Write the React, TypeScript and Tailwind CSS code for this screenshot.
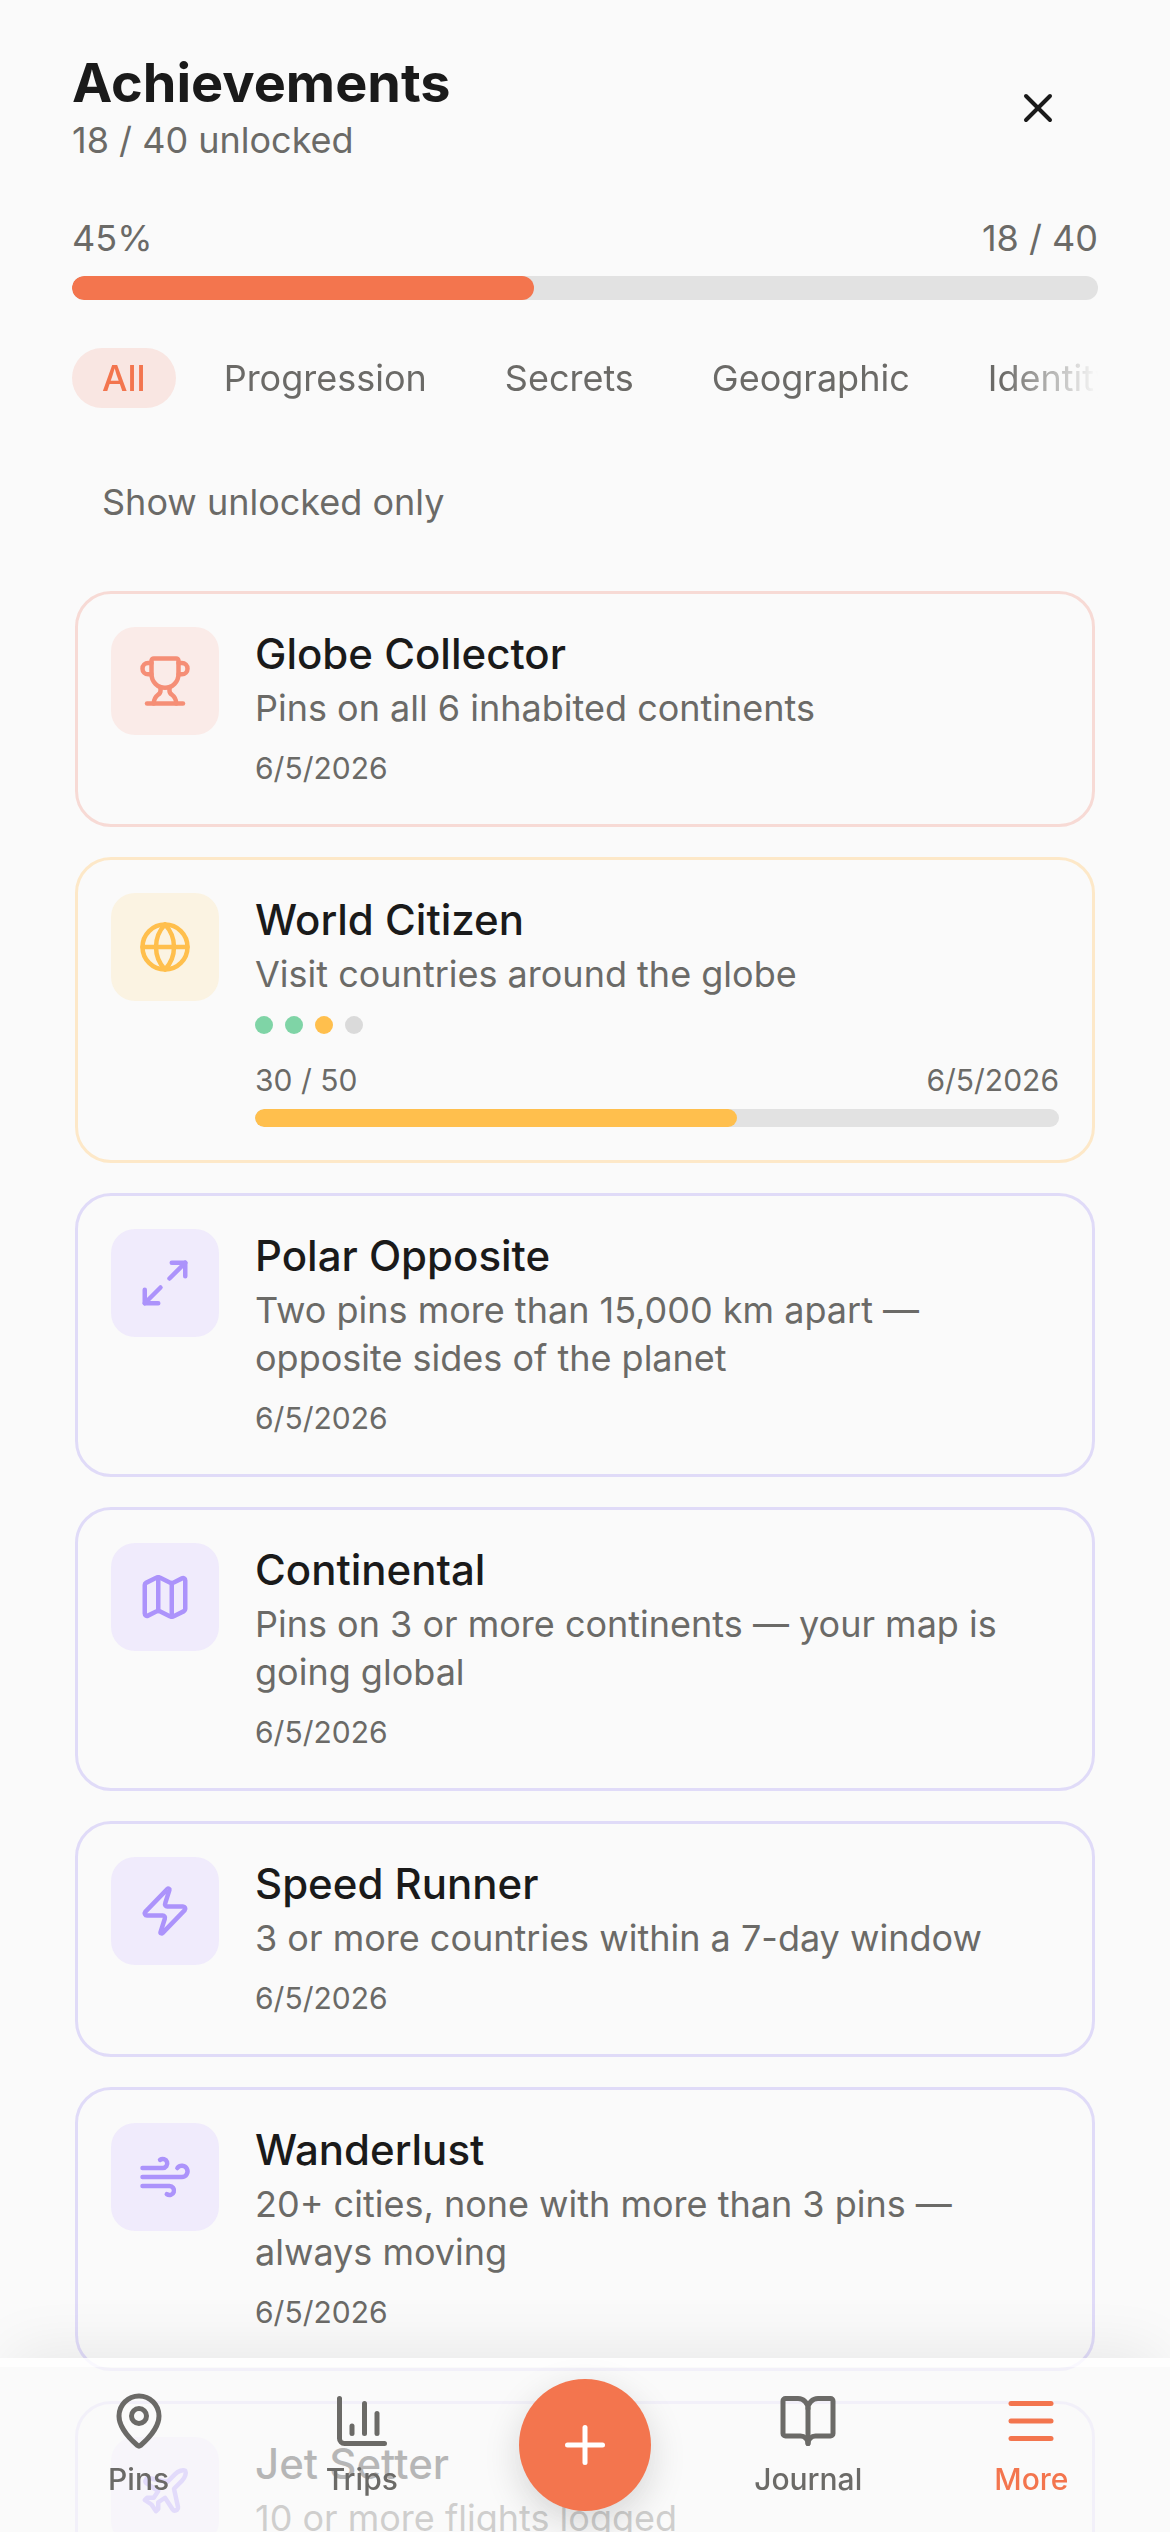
import {
  BookOpen,
  ChartColumn,
  Globe,
  Map,
  MapPin,
  Maximize2,
  Menu,
  Plane,
  Plus,
  Trophy,
  Wind,
  X,
  Zap,
  type LucideIcon,
} from 'lucide-react'
import clsx from 'clsx'
import { useState } from 'react'

type Tone = 'coral' | 'amber' | 'violet'

interface Achievement {
  title: string
  description: string
  date: string
  icon: LucideIcon
  tone: Tone
  tiers?: string[]
  progress?: { value: number; max: number }
}

const tones: Record<Tone, { border: string; tile: string }> = {
  coral: { border: 'border-[#f7dad5]', tile: 'bg-[#faebe8] text-[#f58e76]' },
  amber: { border: 'border-[#fde8c8]', tile: 'bg-[#fbf3e2] text-[#ffbf4d]' },
  violet: { border: 'border-[#e0dbf8]', tile: 'bg-[#f0ebfc] text-[#ac93fb]' },
}

const tierColors: Record<string, string> = {
  done: 'bg-[#7fd4a6]',
  current: 'bg-[#ffbf4d]',
  locked: 'bg-[#dadada]',
}

const categories = ['All', 'Progression', 'Secrets', 'Geographic', 'Identity']

const achievements: Achievement[] = [
  {
    title: 'Globe Collector',
    description: 'Pins on all 6 inhabited continents',
    date: '6/5/2026',
    icon: Trophy,
    tone: 'coral',
  },
  {
    title: 'World Citizen',
    description: 'Visit countries around the globe',
    date: '6/5/2026',
    icon: Globe,
    tone: 'amber',
    tiers: ['done', 'done', 'current', 'locked'],
    progress: { value: 30, max: 50 },
  },
  {
    title: 'Polar Opposite',
    description: 'Two pins more than 15,000 km apart — opposite sides of the planet',
    date: '6/5/2026',
    icon: Maximize2,
    tone: 'violet',
  },
  {
    title: 'Continental',
    description: 'Pins on 3 or more continents — your map is going global',
    date: '6/5/2026',
    icon: Map,
    tone: 'violet',
  },
  {
    title: 'Speed Runner',
    description: '3 or more countries within a 7-day window',
    date: '6/5/2026',
    icon: Zap,
    tone: 'violet',
  },
  {
    title: 'Wanderlust',
    description: '20+ cities, none with more than 3 pins — always moving',
    date: '6/5/2026',
    icon: Wind,
    tone: 'violet',
  },
  {
    title: 'Jet Setter',
    description: '10 or more flights logged',
    date: '6/5/2026',
    icon: Plane,
    tone: 'violet',
  },
]

interface ProgressBarProps {
  label: string
  value: number
  max: number
  className: string
  fillClassName: string
}

function ProgressBar({ label, value, max, className, fillClassName }: ProgressBarProps) {
  return (
    <div
      role="progressbar"
      aria-label={label}
      aria-valuenow={value}
      aria-valuemax={max}
      className={clsx('overflow-hidden rounded-full bg-[#e2e2e2]', className)}
    >
      <div className={clsx('h-full rounded-full', fillClassName)} style={{ width: `${(value / max) * 100}%` }} />
    </div>
  )
}

function AchievementCard({ item }: { item: Achievement }) {
  const Icon = item.icon
  const tone = tones[item.tone]

  return (
    <li className={clsx('flex items-start gap-9 rounded-[36px] border-3 p-[33px]', tone.border)}>
      <div className={clsx('flex size-[108px] shrink-0 items-center justify-center rounded-3xl', tone.tile)}>
        <Icon size={54} />
      </div>
      <div className="min-w-0 flex-1">
        <h2 className="text-[42px] leading-[54px] font-medium text-[#1a1a1a]">{item.title}</h2>
        <p className="mt-[3px] text-[36px] leading-[48px]">{item.description}</p>

        {item.tiers && (
          <div className="mt-[18px] mb-6 flex gap-3">
            {item.tiers.map((tier, index) => (
              <span key={index} className={clsx('size-[18px] rounded-full', tierColors[tier])} />
            ))}
          </div>
        )}

        {item.progress ? (
          <>
            <div className="mb-1.5 flex justify-between text-[30px] leading-[45px]">
              <span>
                {item.progress.value} / {item.progress.max}
              </span>
              <span>{item.date}</span>
            </div>
            <ProgressBar
              label={item.title}
              value={item.progress.value}
              max={item.progress.max}
              className="h-[18px]"
              fillClassName="bg-[#ffbf4d]"
            />
          </>
        ) : (
          <p className="mt-[14px] text-[30px] leading-[45px]">{item.date}</p>
        )}
      </div>
    </li>
  )
}

function NavItem({ icon: Icon, label, active = false }: { icon: LucideIcon; label: string; active?: boolean }) {
  return (
    <a
      href="#"
      aria-current={active ? 'page' : undefined}
      className={clsx(
        'flex flex-col items-center gap-1.5 pt-6 text-[30px] leading-[45px] font-medium',
        active && 'text-[#f3754e]',
      )}
    >
      <Icon size={60} />
      {label}
    </a>
  )
}

function BottomNav() {
  return (
    <nav className="fixed inset-x-0 bottom-0 grid h-[174px] grid-cols-5 border-t-9 border-white/80 bg-[#fafafa]/70 bg-clip-padding px-[27px] shadow-[0_-18px_60px_-12px_rgba(0,0,0,0.08)]">
      <NavItem icon={MapPin} label="Pins" />
      <NavItem icon={ChartColumn} label="Trips" />
      <button
        type="button"
        aria-label="Add"
        className="mt-3 flex size-[132px] items-center justify-center justify-self-center rounded-full bg-[#f3754e] text-white shadow-[0_12px_36px_rgba(0,0,0,0.15)]"
      >
        <Plus size={60} />
      </button>
      <NavItem icon={BookOpen} label="Journal" />
      <NavItem icon={Menu} label="More" active />
    </nav>
  )
}

export default function App() {
  const [category, setCategory] = useState('All')
  const [unlockedOnly, setUnlockedOnly] = useState(false)

  return (
    <div className="h-screen overflow-y-auto bg-[#fafafa] font-['Inter',sans-serif] text-[#6b6a67] [font-optical-sizing:none] [scrollbar-width:none]">
      <main className="px-[72px] pt-12 pb-[210px]">
        <header className="flex items-center justify-between">
          <div>
            <h1 className="text-[54px] leading-[64px] font-bold text-[#1a1a1a]">Achievements</h1>
            <p className="text-[36px] leading-[51px]">18 / 40 unlocked</p>
          </div>
          <button type="button" aria-label="Close" className="flex size-[120px] items-center justify-center text-[#1a1a1a]">
            <X size={48} />
          </button>
        </header>

        <div className="mt-[45px] mb-3 flex justify-between text-[36px] leading-[51px]">
          <span>45%</span>
          <span>18 / 40</span>
        </div>
        <ProgressBar label="Achievements unlocked" value={18} max={40} className="h-6" fillClassName="bg-[#f3754e]" />

        <div className="mt-12 flex gap-[18px] overflow-hidden [mask-image:linear-gradient(to_right,black_calc(100%_-_96px),transparent)]">
          {categories.map((name) => (
            <button
              key={name}
              type="button"
              aria-pressed={name === category}
              onClick={() => setCategory(name)}
              className={clsx(
                'h-[60px] shrink-0 rounded-full px-[30px] text-[36px] leading-[60px]',
                name === category && 'bg-[#f9e6e2] font-medium text-[#f3754e]',
              )}
            >
              {name}
            </button>
          ))}
        </div>

        <button
          type="button"
          aria-pressed={unlockedOnly}
          onClick={() => setUnlockedOnly(!unlockedOnly)}
          className="mt-16 block h-[60px] rounded-full px-[30px] text-[36px] leading-[60px]"
        >
          Show unlocked only
        </button>

        <ul className="mt-[59px] flex flex-col gap-[30px] px-[3px]">
          {achievements.map((item) => (
            <AchievementCard key={item.title} item={item} />
          ))}
        </ul>
      </main>
      <BottomNav />
    </div>
  )
}
